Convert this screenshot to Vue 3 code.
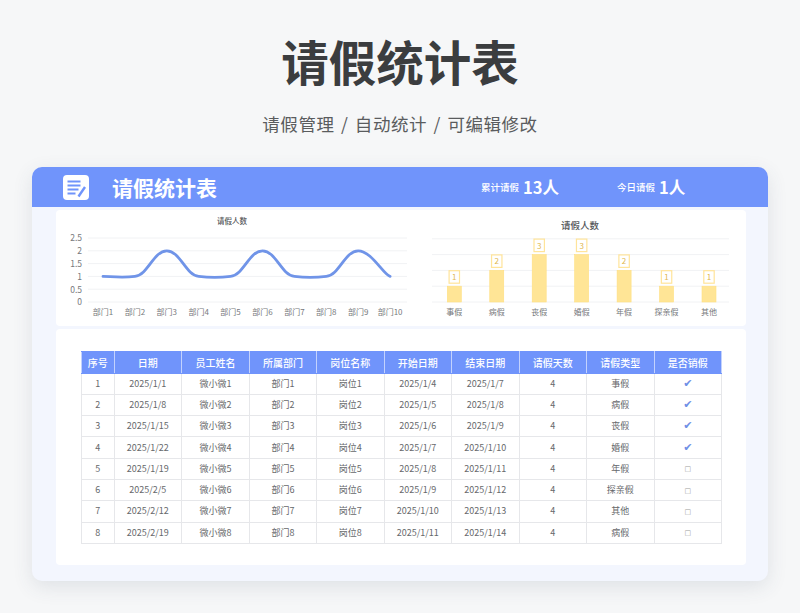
<template>
  <div class="page">
    <h1 class="main-title">请假统计表</h1>
    <p class="sub-title">请假管理 / 自动统计 / 可编辑修改</p>

    <section class="card">
      <header class="card-head">
        <svg class="logo" viewBox="0 0 26 25">
          <rect width="26" height="25" rx="4" fill="#fff" />
          <path d="M4.5 6.5h13M4.5 10.5h13M4.5 14.5h11M4.5 18.5h8" stroke="#7094fb" stroke-width="1.9" fill="none" />
          <path d="M15.5 21.5 22 12" stroke="#7094fb" stroke-width="2.4" fill="none" />
        </svg>
        <h2 class="card-title">请假统计表</h2>
        <div class="stat stat-total"><span>累计请假</span><strong>13人</strong></div>
        <div class="stat stat-today"><span>今日请假</span><strong>1人</strong></div>
      </header>

      <div class="card-body">
        <div class="charts">
          <svg class="line-chart" viewBox="0 0 351 116">
            <text x="176" y="14" class="chart-title small" text-anchor="middle">请假人数</text>
            <g v-for="(tick, i) in lineTicks" :key="tick">
              <line x1="32" x2="351" :y1="92 - i * 12.8" :y2="92 - i * 12.8" class="grid" />
              <text x="26" :y="95.4 - i * 12.8" class="axis tick-label" text-anchor="end">{{ tick }}</text>
            </g>
            <path :d="linePath" class="curve" />
            <text v-for="(d, i) in depts" :key="d" :x="47 + i * 31.9" y="105" class="axis" text-anchor="middle">{{ d }}</text>
          </svg>

          <svg class="bar-chart" viewBox="0 0 339 116">
            <text x="173" y="19" class="chart-title" text-anchor="middle">请假人数</text>
            <line v-for="n in 5" :key="n" x1="25" x2="322" :y1="92 - (n - 1) * 15.8" :y2="92 - (n - 1) * 15.8" class="grid" />
            <g v-for="(b, i) in bars" :key="b.name">
              <rect :x="47.3 + i * 42.45 - 7" :y="92 - b.value * 15.8" width="14" :height="b.value * 15.8" class="bar" />
              <rect :x="47.3 + i * 42.45 - 5.2" :y="92 - b.value * 15.8 - 15.5" width="10.4" height="12.5" class="bar-tag" />
              <text :x="47.3 + i * 42.45" :y="92 - b.value * 15.8 - 6" class="bar-num" text-anchor="middle">{{ b.value }}</text>
              <text :x="47.3 + i * 42.45" y="105" class="axis" text-anchor="middle">{{ b.name }}</text>
            </g>
          </svg>
        </div>

        <div class="table-panel">
          <table class="leave-table">
            <colgroup>
              <col v-for="(w, i) in colWidths" :key="i" :style="{ width: w + 'px' }" />
            </colgroup>
            <thead>
              <tr>
                <th v-for="h in headers" :key="h">{{ h }}</th>
              </tr>
            </thead>
            <tbody>
              <tr v-for="(row, i) in rows" :key="row[0]">
                <td>{{ i + 1 }}</td>
                <td>{{ row[0] }}</td>
                <td>微小微{{ i + 1 }}</td>
                <td>部门{{ i + 1 }}</td>
                <td>岗位{{ i + 1 }}</td>
                <td>{{ row[1] }}</td>
                <td>{{ row[2] }}</td>
                <td>4</td>
                <td>{{ row[3] }}</td>
                <td>
                  <span v-if="i < 4" class="tick">✔</span>
                  <span v-else class="box">□</span>
                </td>
              </tr>
            </tbody>
          </table>
        </div>
      </div>
    </section>
  </div>
</template>

<script setup>
const lineTicks = ['0', '0.5', '1', '1.5', '2', '2.5']
const depts = ['部门1', '部门2', '部门3', '部门4', '部门5', '部门6', '部门7', '部门8', '部门9', '部门10']
const lineValues = [1, 1, 2, 1, 1, 2, 1, 1, 2, 1]

const bars = [
  { name: '事假', value: 1 },
  { name: '病假', value: 2 },
  { name: '丧假', value: 3 },
  { name: '婚假', value: 3 },
  { name: '年假', value: 2 },
  { name: '探亲假', value: 1 },
  { name: '其他', value: 1 },
]

const headers = ['序号', '日期', '员工姓名', '所属部门', '岗位名称', '开始日期', '结束日期', '请假天数', '请假类型', '是否销假']
const colWidths = [32.5, 67.5, 68, 67, 67.5, 67.5, 67.5, 67.5, 67.5, 67.5]

const rows = [
  ['2025/1/1', '2025/1/4', '2025/1/7', '事假'],
  ['2025/1/8', '2025/1/5', '2025/1/8', '病假'],
  ['2025/1/15', '2025/1/6', '2025/1/9', '丧假'],
  ['2025/1/22', '2025/1/7', '2025/1/10', '婚假'],
  ['2025/1/19', '2025/1/8', '2025/1/11', '年假'],
  ['2025/2/5', '2025/1/9', '2025/1/12', '探亲假'],
  ['2025/2/12', '2025/1/10', '2025/1/13', '其他'],
  ['2025/2/19', '2025/1/11', '2025/1/14', '病假'],
]

// catmull-rom style curve, y tangents damped so the flats only dip a little
const pts = lineValues.map((v, i) => [47 + i * 31.9, 92 - v * 25.6])
const linePath = pts
  .map((p, i) => {
    if (i === 0) return `M${p[0]} ${p[1]}`
    const p0 = pts[i - 2] || pts[i - 1]
    const p1 = pts[i - 1]
    const p3 = pts[i + 1] || p
    const kx = 4.8
    const ky = 16
    return `C${p1[0] + (p[0] - p0[0]) / kx} ${p1[1] + (p[1] - p0[1]) / ky} ${p[0] - (p3[0] - p1[0]) / kx} ${p[1] - (p3[1] - p1[1]) / ky} ${p[0]} ${p[1]}`
  })
  .join(' ')
</script>

<style scoped>
.page {
  width: 800px;
  height: 613px;
  padding-top: 32px;
  box-sizing: border-box;
  font-family: "Noto Sans CJK SC", "Noto Sans", sans-serif;
  overflow: hidden;
}

.main-title {
  margin: 0;
  height: 58px;
  line-height: 58px;
  text-align: center;
  font-size: 47.5px;
  font-weight: 700;
  color: #3b3d3f;
}

.sub-title {
  margin: 21px 0 0;
  height: 26px;
  line-height: 26px;
  text-align: center;
  font-size: 17.5px;
  letter-spacing: 0.55px;
  word-spacing: 2px;
  color: #5a5c5e;
}

.card {
  margin: 30px 32px 0;
  height: 414px;
  border-radius: 10px;
  background: #f3f6fe;
  box-shadow: 0 6px 20px rgba(60, 70, 100, .12);
  overflow: hidden;
}

.card-head {
  display: flex;
  align-items: center;
  height: 40px;
  padding-left: 31px;
  background: #7094fb;
  color: #fff;
}

.logo {
  width: 26px;
  height: 25px;
  flex: none;
}

.card-title {
  margin: 0 0 0 23px;
  width: 369px;
  flex: none;
  font-size: 21px;
  font-weight: 700;
}

.stat {
  display: flex;
  align-items: center;
  gap: 4px;
}

.stat span {
  font-size: 9.5px;
  font-weight: 500;
}

.stat strong {
  font-size: 16.5px;
  font-weight: 700;
}

.stat-today {
  margin-left: 58px;
}

.card-body {
  padding: 3px 22px 16px 24px;
  display: flex;
  flex-direction: column;
  gap: 3px;
}

.charts {
  display: flex;
  height: 116px;
  background: #fff;
  border-radius: 4px;
}

.line-chart {
  width: 351px;
  height: 116px;
  flex: none;
}

.bar-chart {
  width: 339px;
  height: 116px;
  flex: none;
}

.grid {
  stroke: #f1f2f4;
  stroke-width: 1;
}

.axis {
  font-size: 8px;
  fill: #77797c;
}

.tick-label {
  font-size: 8.5px;
}

.chart-title {
  font-size: 9.5px;
  font-weight: 500;
  fill: #55575a;
}

.chart-title.small {
  font-size: 7.5px;
}

.curve {
  fill: none;
  stroke: #7094e8;
  stroke-width: 2.8;
  stroke-linecap: round;
}

.bar {
  fill: #ffe596;
  stroke: #ffdf80;
  stroke-width: .6;
}

.bar-tag {
  fill: #fff;
  stroke: #ffe49a;
  stroke-width: 1.2;
}

.bar-num {
  font-size: 8px;
  fill: #e0b74e;
}

.table-panel {
  height: 236px;
  padding: 22px 25px 0;
  box-sizing: border-box;
  background: #fff;
  border-radius: 4px;
}

.leave-table {
  width: 640px;
  table-layout: fixed;
  border-collapse: collapse;
  font-size: 9px;
  color: #66686b;
}

.leave-table th {
  height: 20.5px;
  padding: 0;
  background: #7094fb;
  color: #fff;
  font-size: 10px;
  font-weight: 500;
  border: 1px solid #a9bffc;
  border-color: #7094fb #c3d2fd #7094fb #c3d2fd;
}

.leave-table td {
  height: 20.3px;
  padding: 0;
  line-height: 12px;
  text-align: center;
  border: 1px solid #e6e7ea;
}

.tick {
  color: #6f8fe6;
  font-family: "DejaVu Sans", sans-serif;
  font-size: 11px;
}

.box {
  color: #9a9ca0;
  font-family: "DejaVu Sans", sans-serif;
  font-size: 7px;
}
</style>

<style>
body {
  background: #f6f7f8;
}
</style>
